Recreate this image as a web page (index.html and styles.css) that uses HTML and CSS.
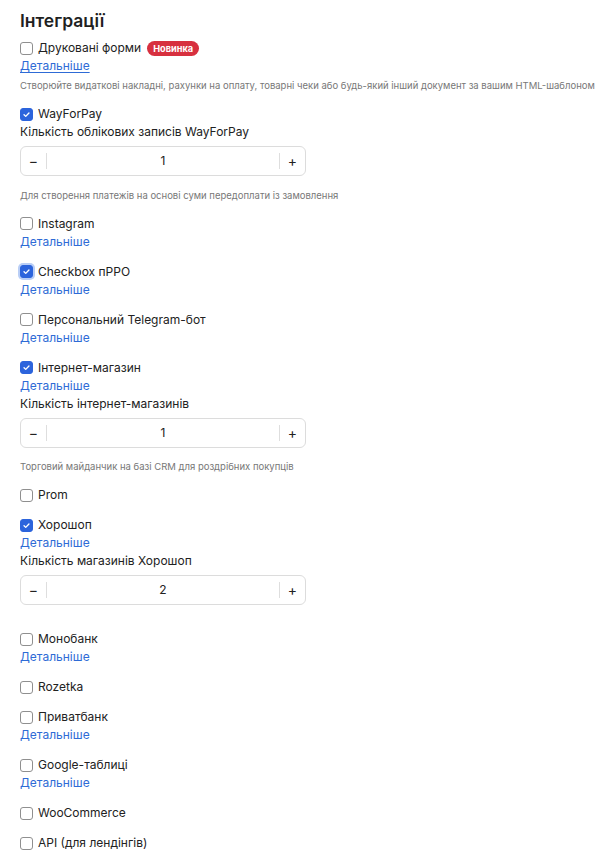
FILE: index.html
```html
<!DOCTYPE html>
<html lang="uk">
<head>
<meta charset="utf-8">
<title>Інтеграції</title>
<link rel="stylesheet" href="styles.css">
</head>
<body>
<div class="page">
  <h2 class="title">Інтеграції</h2>
  <div class="list">
    <div class="item">
      <div class="row"><span class="cb"></span><span class="name">Друковані форми</span><span class="badge">Новинка</span></div>
      <a class="more under" href="#">Детальніше</a>
      <div class="desc tight">Створюйте видаткові накладні, рахунки на оплату, товарні чеки або будь-який інший документ за вашим HTML-шаблоном</div>
    </div>
    <div class="item">
      <div class="row"><span class="cb on"><svg viewBox="0 0 13 13"><path d="M3.6 6.7l2 2 3.8-4" fill="none" stroke="#fff" stroke-width="1.6" stroke-linecap="round" stroke-linejoin="round"/></svg></span><span class="name">WayForPay</span></div>
      <div class="label">Кількість облікових записів WayForPay</div>
      <div class="stepper"><span class="btn minus">−</span><span class="val">1</span><span class="btn plus">+</span></div>
      <div class="desc">Для створення платежів на основі суми передоплати із замовлення</div>
    </div>
    <div class="item">
      <div class="row"><span class="cb"></span><span class="name">Instagram</span></div>
      <a class="more" href="#">Детальніше</a>
    </div>
    <div class="item">
      <div class="row"><span class="cb on focus"><svg viewBox="0 0 13 13"><path d="M3.6 6.7l2 2 3.8-4" fill="none" stroke="#fff" stroke-width="1.6" stroke-linecap="round" stroke-linejoin="round"/></svg></span><span class="name">Checkbox пРРО</span></div>
      <a class="more" href="#">Детальніше</a>
    </div>
    <div class="item">
      <div class="row"><span class="cb"></span><span class="name">Персональний Telegram-бот</span></div>
      <a class="more" href="#">Детальніше</a>
    </div>
    <div class="item">
      <div class="row"><span class="cb on"><svg viewBox="0 0 13 13"><path d="M3.6 6.7l2 2 3.8-4" fill="none" stroke="#fff" stroke-width="1.6" stroke-linecap="round" stroke-linejoin="round"/></svg></span><span class="name">Інтернет-магазин</span></div>
      <a class="more" href="#">Детальніше</a>
      <div class="label">Кількість інтернет-магазинів</div>
      <div class="stepper"><span class="btn minus">−</span><span class="val">1</span><span class="btn plus">+</span></div>
      <div class="desc">Торговий майданчик на базі CRM для роздрібних покупців</div>
    </div>
    <div class="item">
      <div class="row"><span class="cb"></span><span class="name">Prom</span></div>
    </div>
    <div class="item extra">
      <div class="row"><span class="cb on"><svg viewBox="0 0 13 13"><path d="M3.6 6.7l2 2 3.8-4" fill="none" stroke="#fff" stroke-width="1.6" stroke-linecap="round" stroke-linejoin="round"/></svg></span><span class="name">Хорошоп</span></div>
      <a class="more" href="#">Детальніше</a>
      <div class="label">Кількість магазинів Хорошоп</div>
      <div class="stepper"><span class="btn minus">−</span><span class="val">2</span><span class="btn plus">+</span></div>
    </div>
    <div class="item">
      <div class="row"><span class="cb"></span><span class="name">Монобанк</span></div>
      <a class="more" href="#">Детальніше</a>
    </div>
    <div class="item">
      <div class="row"><span class="cb"></span><span class="name">Rozetka</span></div>
    </div>
    <div class="item">
      <div class="row"><span class="cb"></span><span class="name">Приватбанк</span></div>
      <a class="more" href="#">Детальніше</a>
    </div>
    <div class="item">
      <div class="row"><span class="cb"></span><span class="name">Google-таблиці</span></div>
      <a class="more" href="#">Детальніше</a>
    </div>
    <div class="item">
      <div class="row"><span class="cb"></span><span class="name">WooCommerce</span></div>
    </div>
    <div class="item">
      <div class="row"><span class="cb"></span><span class="name">API (для лендінгів)</span></div>
    </div>
  </div>
</div>
</body>
</html>
```

FILE: styles.css
```css
* { box-sizing: border-box; }
html, body { margin: 0; padding: 0; background: #fff; }
body {
  font-family: Inter, "Noto Sans", sans-serif;
  color: #222;
  font-size: 12px;
  line-height: 18px;
}
.page { padding: 9px 0 0 20px; }
.title {
  margin: 0 0 6px;
  font-size: 17.5px;
  line-height: 24px;
  font-weight: 600;
  color: #1f1f1f;
}
.list { display: flex; flex-direction: column; gap: 12px; }
.item { display: flex; flex-direction: column; align-items: flex-start; }
.item.extra { padding-bottom: 13px; }
.row { display: flex; align-items: center; height: 18px; white-space: nowrap; }
.cb {
  width: 13px; height: 13px;
  border: 1px solid #8f8f8f;
  border-radius: 3px;
  background: #fff;
  margin-right: 5px;
  flex: none;
  display: flex;
}
.cb svg { width: 100%; height: 100%; display: block; }
.cb.on { background: #2c64dc; border-color: #2c64dc; }
.cb.focus { box-shadow: 0 0 0 2px #b9cef6; }
.name { color: #222; }
.badge {
  margin-left: 6px;
  background: #d7303f;
  color: #fff;
  font-size: 9.2px;
  font-weight: 700;
  line-height: 15px;
  height: 15px;
  padding: 0 6px;
  border-radius: 8px;
}
.more {
  color: #2e6bd6;
  text-decoration: none;
  line-height: 18px;
}
.more.under { text-decoration: underline; text-underline-offset: 2px; }
.label { line-height: 18px; color: #222; }
.stepper {
  margin-top: 5px;
  width: 286px;
  height: 30px;
  border: 1px solid #dcdcdc;
  border-radius: 6px;
  display: flex;
  align-items: center;
}
.btn {
  width: 26px;
  height: 16px;
  display: flex;
  align-items: center;
  justify-content: center;
  font-size: 14px;
  color: #222;
  flex: none;
}
.minus { border-right: 1px solid #dedede; }
.plus { border-left: 1px solid #dedede; }
.val { flex: 1; text-align: center; font-size: 12px; }
.desc {
  margin-top: 11.5px;
  font-size: 9.5px;
  line-height: 15px;
  color: #777;
  white-space: nowrap;
}
.desc.tight { margin-top: 3px; }
```
